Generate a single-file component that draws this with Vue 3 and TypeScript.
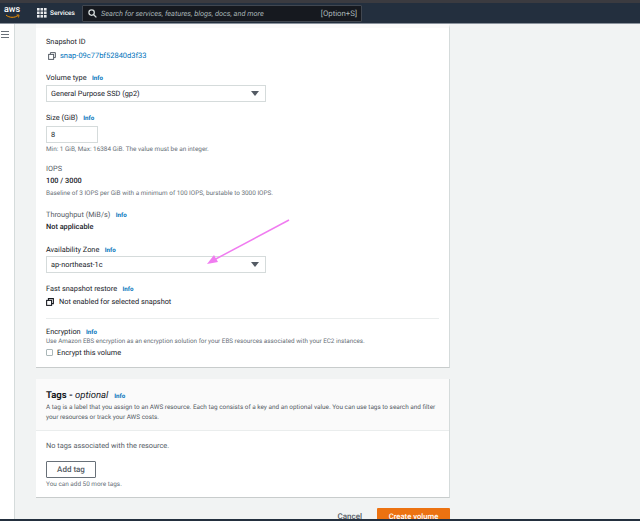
<script setup lang="ts">
const gridDots: number[] = [0, 1, 2]
</script>

<template>
  <div class="page">
    <div class="topstrip"></div>
    <header class="nav">
      <div class="logo">
        <span class="logo-text">aws</span>
        <svg class="smile" width="15" height="5" viewBox="0 0 15 5"><path d="M1 1 C4 4 10 4 13 1.5" fill="none" stroke="#f29100" stroke-width="1"/><path d="M11.500 1 L14 1 L13.500 3.500" fill="none" stroke="#f29100" stroke-width="0.8"/></svg>
      </div>
      <div class="services">
        <svg width="10" height="10" viewBox="0 0 10 10" class="grid-icon">
          <template v-for="r in gridDots" :key="r">
            <rect v-for="c in gridDots" :key="c" :x="c * 3.500" :y="r * 3.500" width="2.600" height="2.600" fill="#e8eaed"/>
          </template>
        </svg>
        <span>Services</span>
      </div>
      <div class="search">
        <svg width="9" height="9" viewBox="0 0 10 10"><circle cx="4" cy="4" r="3" fill="none" stroke="#d5dbdb" stroke-width="1.400"/><path d="M6.300 6.300 L9.300 9.300" stroke="#d5dbdb" stroke-width="1.500"/></svg>
        <span class="placeholder">Search for services, features, blogs, docs, and more</span>
        <span class="shortcut">[Option+S]</span>
      </div>
    </header>

    <div class="body">
      <aside class="side">
        <svg width="8" height="7" viewBox="0 0 8 7"><path d="M0 0.500 H8 M0 3.500 H8 M0 6.500 H8" stroke="#687078" stroke-width="1"/></svg>
      </aside>
      <main class="main">
        <section class="card first">
          <div class="label">Snapshot ID</div>
          <div class="copy-row link-row">
            <svg class="copy" width="8" height="8" viewBox="0 0 9 9"><rect x="0.700" y="2.700" width="5.600" height="5.600" fill="none" stroke="#545b64" stroke-width="1.100"/><path d="M2.700 2.500 V0.700 H8.300 V6.300 H6.500" fill="none" stroke="#545b64" stroke-width="1.100"/></svg>
            <a class="link">snap-09c77bf52840d3f33</a>
          </div>
          <div class="label gap-vt">Volume type <span class="info">Info</span></div>
          <div class="select"><span>General Purpose SSD (gp2)</span><i class="caret"></i></div>

          <div class="label gap-size">Size (GiB) <span class="info">Info</span></div>
          <div class="input">8</div>
          <div class="hint h-size">Min: 1 GiB, Max: 16384 GiB. The value must be an integer.</div>

          <div class="label muted gap-iops">IOPS</div>
          <div class="value">100 / 3000</div>
          <div class="hint h-base">Baseline of 3 IOPS per GiB with a minimum of 100 IOPS, burstable to 3000 IOPS.</div>

          <div class="label muted gap-tp">Throughput (MiB/s) <span class="info">Info</span></div>
          <div class="value">Not applicable</div>

          <div class="label gap-az">Availability Zone <span class="info">Info</span></div>
          <div class="select az"><span>ap-northeast-1c</span><i class="caret"></i></div>

          <div class="label gap-fast">Fast snapshot restore <span class="info">Info</span></div>
          <div class="copy-row fast-row">
            <svg class="copy" width="8" height="8" viewBox="0 0 9 9"><rect x="0.700" y="2.700" width="5.600" height="5.600" fill="#fff" stroke="#16191f" stroke-width="1.200"/><path d="M2.700 2.500 V0.700 H8.300 V6.300 H6.500" fill="none" stroke="#16191f" stroke-width="1.200"/></svg>
            <span class="plain">Not enabled for selected snapshot</span>
          </div>

          <hr class="rule" />

          <div class="label">Encryption <span class="info">Info</span></div>
          <div class="hint h-enc">Use Amazon EBS encryption as an encryption solution for your EBS resources associated with your EC2 instances.</div>
          <label class="check-row"><span class="box"></span><span class="plain">Encrypt this volume</span></label>
        </section>

        <section class="card tags">
          <div class="tags-head">
            <h2>Tags - <em>optional</em> <span class="info">Info</span></h2>
            <p>A tag is a label that you assign to an AWS resource. Each tag consists of a key and an optional value. You can use tags to search and filter<br />your resources or track your AWS costs.</p>
          </div>
          <div class="tags-body">
            <div class="no-tags">No tags associated with the resource.</div>
            <button class="btn">Add tag</button>
            <div class="hint h-add">You can add 50 more tags.</div>
          </div>
        </section>

        <div class="actions">
          <span class="cancel">Cancel</span>
          <button class="primary">Create volume</button>
        </div>
      </main>
    </div>
    <div class="bottombar"></div>

    <svg class="arrow" width="640" height="521" viewBox="0 0 640 521">
      <path d="M289 220 L212 261" stroke="#f07cf0" stroke-width="1.500" fill="none"/>
      <path d="M207 264 L214 255 L218 262 Z" fill="#f07cf0"/>
    </svg>
  </div>
</template>

<style>
html, body { margin: 0; background: #f1f3f3; }
</style>

<style scoped>
.page {
  position: relative;
  width: 640px;
  height: 521px;
  overflow: hidden;
  display: flex;
  flex-direction: column;
  font-family: Roboto, "Open Sans", sans-serif;
  text-rendering: geometricPrecision;
  color: #16191f;
  background: #f1f3f3;
}
.topstrip { height: 3px; background: #3b3b40; flex: none; }
.nav {
  height: 21px;
  flex: none;
  background: #232f3e;
  border-bottom: 1px solid #8a929c;
  box-sizing: border-box;
  display: flex;
  align-items: center;
  color: #fff;
}
.logo {
  width: 20px;
  margin-left: 2px;
  display: flex;
  flex-direction: column;
  align-items: center;
  height: 18px;
}
.logo-text { font: 500 9px/11px Roboto, sans-serif; margin-top: 1px; color: #fff; }
.smile { margin-top: -2px; }
.services {
  margin-left: 15px;
  display: flex;
  align-items: center;
  gap: 3px;
  font-size: 6.500px;
  font-weight: 500;
  width: 45px;
  flex: none;
}
.grid-icon { flex: none; }
.search {
  width: 280px;
  height: 17px;
  box-sizing: border-box;
  background: #16191f;
  border: 1px solid #414750;
  border-radius: 1px;
  display: flex;
  align-items: center;
  padding: 0 4px 0 5px;
  gap: 4px;
  font-size: 7.350px;
}
.placeholder { font-style: italic; color: #aab7b8; flex: 1; white-space: nowrap; }
.shortcut { color: #aab7b8; white-space: nowrap; font-size: 7.800px; }

.body { flex: 1; display: flex; min-height: 0; }
.side {
  width: 15px;
  flex: none;
  background: #fff;
  border-right: 1px solid #d5dbdb;
  box-sizing: border-box;
  padding: 7px 0 0 1px;
}
.side svg { display: block; }
.main { padding-left: 21px; width: 414px; }
.card {
  width: 414px;
  box-sizing: border-box;
  background: #fff;
  border-right: 1px solid #d5dbdb;
  border-bottom: 1px solid #c8cccc;
}
.first { height: 344px; padding: 8px 10px 0 10px; border-top: 4px solid #fafafa; }

.label { font-size: 7.350px; line-height: 11px; color: #16191f; white-space: nowrap; }
.muted { color: #545b64; }
.info { color: #0073bb; font-size: 6.200px; font-weight: 700; margin-left: 3.500px; line-height: 0; }
.copy-row { display: flex; align-items: center; line-height: 12px; }
.link-row { margin: 3px 0 0 2px; gap: 4px; }
.copy { flex: none; }
.link { color: #0073bb; font-size: 7.500px; }
.gap-vt { margin-top: 10px; }
.select {
  margin-top: 2px;
  width: 220px;
  height: 17px;
  box-sizing: border-box;
  border: 1px solid #d5dbdb;
  background: #fff;
  display: flex;
  align-items: center;
  justify-content: space-between;
  padding: 0 6px 0 4px;
  font-size: 7.350px;
  color: #16191f;
}
.az { margin-top: 1px; }
.caret {
  width: 0;
  height: 0;
  border-left: 4px solid transparent;
  border-right: 4px solid transparent;
  border-top: 5px solid #545b64;
}
.gap-size { margin-top: 10px; }
.input {
  margin-top: 3px;
  width: 52px;
  height: 17px;
  box-sizing: border-box;
  border: 1px solid #d5dbdb;
  padding-left: 4px;
  font-size: 7.350px;
  line-height: 15px;
}
.hint { font-size: 6.400px; line-height: 9px; color: #687078; white-space: nowrap; }
.h-size { margin-top: 2px; }
.gap-iops { margin-top: 9px; }
.value { font-size: 7.350px; font-weight: 500; line-height: 12px; margin-top: 1px; color: #16191f; }
.h-base { margin-top: 2px; }
.gap-tp { margin-top: 11px; }
.gap-az { margin-top: 11px; }
.gap-fast { margin-top: 10px; }
.fast-row { margin-top: 2px; gap: 5px; }
.plain { font-size: 7.350px; color: #16191f; white-space: nowrap; }
.rule { border: 0; border-top: 1px solid #eaeded; margin: 10px 0 7px 0; }
.h-enc { margin-top: 0; font-size: 6.300px; }
.check-row { display: flex; align-items: center; gap: 4px; margin-top: 2px; line-height: 9px; }
.box {
  width: 5px;
  height: 5px;
  border: 1px solid #aab7b8;
  border-radius: 1px;
  background: #fff;
  flex: none;
}

.tags { margin-top: 11px; height: 119px; }
.tags-head {
  background: #fafafa;
  height: 52px;
  box-sizing: border-box;
  padding: 10px 10px 0;
  border-bottom: 1px solid #eaeded;
}
.tags-head h2 { margin: 0; font-size: 9.500px; font-weight: 700; line-height: 13px; }
.tags-head em { font-weight: 400; }
.tags-head p { margin: 1px 0 0; font-size: 6.400px; line-height: 9.500px; color: #545b64; white-space: nowrap; }
.tags-body { padding: 9px 10px 0; }
.no-tags { font-size: 7.350px; line-height: 11px; color: #545b64; }
.btn {
  display: block;
  margin-top: 10px;
  width: 50px;
  height: 17px;
  padding: 0;
  box-sizing: border-box;
  background: #fff;
  border: 1px solid #687078;
  border-radius: 1px;
  font: 500 8px Roboto, sans-serif;
  text-rendering: geometricPrecision;
  color: #545b64;
}
.h-add { margin-top: 2px; }

.actions {
  display: flex;
  justify-content: flex-end;
  align-items: flex-start;
  gap: 15px;
  margin-top: 10px;
  width: 414px;
}
.cancel { font-size: 8px; font-weight: 500; color: #545b64; line-height: 8px; margin-top: 5px; }
.primary {
  width: 73px;
  height: 13px;
  padding: 4px 0 0;
  background: #ec7211;
  border: 0;
  border-radius: 1px;
  color: #fff;
  font: 500 7.700px/9px Roboto, sans-serif;
  text-rendering: geometricPrecision;
}
.bottombar {
  position: absolute;
  left: 0;
  right: 0;
  bottom: 0;
  height: 2px;
  background: #232f3e;
}
.arrow { position: absolute; left: 0; top: 0; pointer-events: none; }
</style>
